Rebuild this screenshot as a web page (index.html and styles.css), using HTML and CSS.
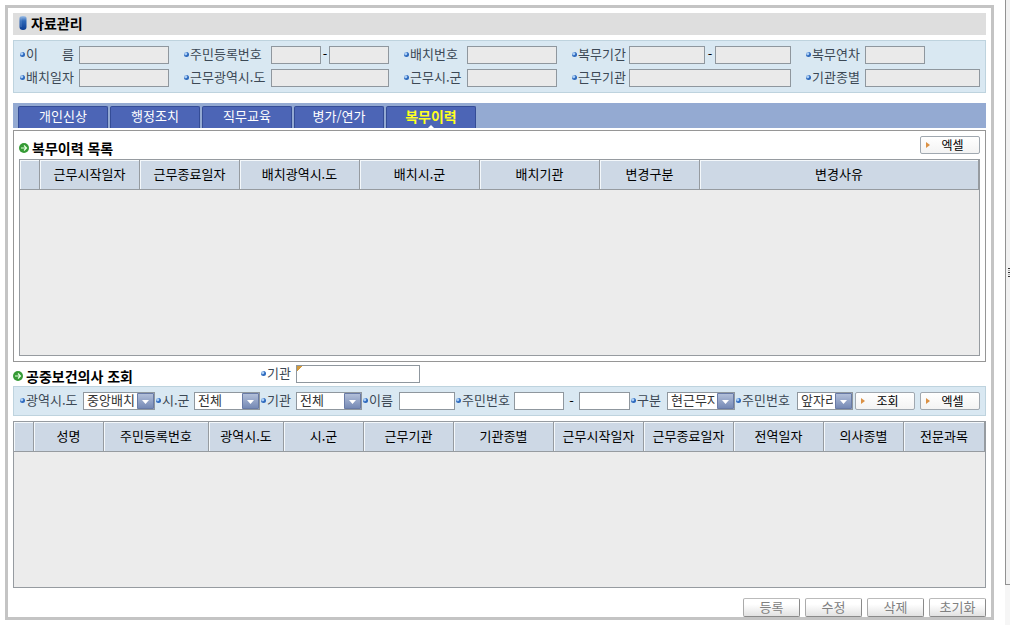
FILE: index.html
```html
<!DOCTYPE html>
<html lang="ko">
<head>
<meta charset="utf-8">
<title>자료관리</title>
<link rel="stylesheet" href="styles.css">
</head>
<body>
<main class="frame">
  <h1 class="page-title">
    <svg width="8" height="16" viewBox="0 0 8 16" aria-hidden="true">
      <defs><linearGradient id="pill" x1="0" y1="0" x2="0" y2="1"><stop offset="0" stop-color="#9fc0e6"/><stop offset=".35" stop-color="#2f68b8"/><stop offset="1" stop-color="#0c3d94"/></linearGradient></defs>
      <path d="M0.5 3Q0.5 1 4 1T7.5 3V12Q7.5 15 4 15T0.5 12Z" fill="url(#pill)"/>
      <path d="M2 3V12" stroke="#8db4e4" stroke-width="1" opacity=".4"/>
    </svg>
    자료관리
  </h1>

  <form class="summary">
    <label class="label" for="s-name"><span class="spread">이 름</span></label>
    <input class="field readonly" id="s-name" readonly>
    <label class="label" for="s-id1">주민등록번호</label>
    <div class="pair id-pair"><input class="field readonly" id="s-id1" readonly><span class="dash">-</span><input class="field readonly" aria-label="주민등록번호 뒷자리" readonly></div>
    <label class="label" for="s-no">배치번호</label>
    <input class="field readonly" id="s-no" readonly>
    <label class="label" for="s-from">복무기간</label>
    <div class="pair"><input class="field readonly" id="s-from" readonly><span class="dash">-</span><input class="field readonly" aria-label="복무기간 종료" readonly></div>
    <label class="label" for="s-year">복무연차</label>
    <input class="field readonly half" id="s-year" readonly>

    <label class="label" for="s-date">배치일자</label>
    <input class="field readonly" id="s-date" readonly>
    <label class="label" for="s-region">근무광역시.도</label>
    <input class="field readonly" id="s-region" readonly>
    <label class="label" for="s-city">근무시.군</label>
    <input class="field readonly" id="s-city" readonly>
    <label class="label" for="s-org">근무기관</label>
    <input class="field readonly" id="s-org" readonly>
    <label class="label" for="s-type">기관종별</label>
    <input class="field readonly" id="s-type" readonly>
  </form>

  <nav class="tabs">
    <button class="tab" type="button">개인신상</button>
    <button class="tab" type="button">행정조치</button>
    <button class="tab" type="button">직무교육</button>
    <button class="tab" type="button">병가/연가</button>
    <button class="tab active" type="button">복무이력</button>
  </nav>

  <section class="history">
    <div class="history-head">
      <h2 class="section-title">
        <svg width="10" height="10" viewBox="0 0 10 10" aria-hidden="true"><circle cx="5" cy="5" r="5" fill="#359a35"/><path d="M2 5H7.5M5 2.5L7.5 5L5 7.5" fill="none" stroke="#e6ffe0" stroke-width="1.2"/></svg>
        복무이력 목록
      </h2>
      <button class="action" type="button">엑셀</button>
    </div>
    <table class="grid">
      <colgroup><col class="w20"><col class="w100"><col class="w100"><col class="w120"><col class="w120"><col class="w120"><col class="w100"><col></colgroup>
      <thead><tr><th></th><th>근무시작일자</th><th>근무종료일자</th><th>배치광역시.도</th><th>배치시.군</th><th>배치기관</th><th>변경구분</th><th>변경사유</th></tr></thead>
      <tbody><tr><td class="empty tall" colspan="8"></td></tr></tbody>
    </table>
  </section>

  <section class="search">
    <div class="search-head">
      <h2 class="section-title">
        <svg width="10" height="10" viewBox="0 0 10 10" aria-hidden="true"><circle cx="5" cy="5" r="5" fill="#359a35"/><path d="M2 5H7.5M5 2.5L7.5 5L5 7.5" fill="none" stroke="#e6ffe0" stroke-width="1.2"/></svg>
        공중보건의사 조회
      </h2>
      <label class="label" for="q-org">기관</label>
      <input class="field required" id="q-org">
    </div>
    <form class="filters">
      <label class="label" for="f-region">광역시.도</label>
      <select class="field select" id="f-region"><option>중앙배치</option></select>
      <label class="label" for="f-city">시.군</label>
      <select class="field select" id="f-city"><option>전체</option></select>
      <label class="label" for="f-org">기관</label>
      <select class="field select" id="f-org"><option>전체</option></select>
      <label class="label" for="f-name">이름</label>
      <input class="field" id="f-name">
      <label class="label" for="f-id">주민번호</label>
      <input class="field" id="f-id">
      <span class="dash">-</span>
      <input class="field" aria-label="주민번호 뒷자리">
      <label class="label" for="f-kind">구분</label>
      <select class="field select" id="f-kind"><option>현근무자</option></select>
      <label class="label" for="f-part">주민번호</label>
      <select class="field select" id="f-part"><option>앞자리</option></select>
      <div class="filter-actions">
        <button class="action" type="button">조회</button>
        <button class="action" type="button">엑셀</button>
      </div>
    </form>
    <table class="grid">
      <colgroup><col class="w20"><col class="w70"><col class="w105"><col class="w75"><col class="w80"><col class="w90"><col class="w100"><col class="w90"><col class="w90"><col class="w90"><col class="w80"><col></colgroup>
      <thead><tr><th></th><th>성명</th><th>주민등록번호</th><th>광역시.도</th><th>시.군</th><th>근무기관</th><th>기관종별</th><th>근무시작일자</th><th>근무종료일자</th><th>전역일자</th><th>의사종별</th><th>전문과목</th></tr></thead>
      <tbody><tr><td class="empty" colspan="12"></td></tr></tbody>
    </table>
  </section>

  <footer class="commands">
    <button class="command" type="button" disabled>등록</button>
    <button class="command" type="button" disabled>수정</button>
    <button class="command" type="button" disabled>삭제</button>
    <button class="command" type="button" disabled>초기화</button>
  </footer>
</main>
<aside class="splitter" aria-hidden="true">
  <div class="splitter-bar"><svg width="2" height="9" viewBox="0 0 2 9"><path d="M0 .5H2M0 4.5H2M0 8.5H2" stroke="#333"/><path d="M0 2.5H2M0 6.5H2" stroke="#aaa"/></svg></div>
</aside>
</body>
</html>
```
FILE: styles.css
```css
* {
  box-sizing: border-box;
}

body {
  display: grid;
  grid-template-columns: minmax(0, 1fr) 5px;
  column-gap: 11px;
  align-items: start;
  margin: 0;
  padding-left: 5px;
  background: #fff;
  color: #000;
  font: 13px/16px "Noto Sans CJK KR", sans-serif;
}

input,
select,
button {
  margin: 0;
  font: inherit;
}

.frame {
  margin-top: 5px;
  padding: 5px 5px 0;
  border: 3px solid #c4c4c4;
}

.page-title {
  display: flex;
  align-items: center;
  gap: 4px;
  height: 22px;
  margin: 0 0 5px;
  padding: 0 0 2px 6px;
  background: #dedede;
  font-size: 14px;
  line-height: 16px;
}

/* Labels and fields */

.label {
  display: flex;
  align-items: center;
  padding-bottom: 2px;
  color: #3c4855;
  white-space: nowrap;
}

.label::before {
  content: "";
  flex: none;
  width: 5px;
  height: 5px;
  margin: 0 1px 0 1px;
  border-radius: 50%;
  background: radial-gradient(circle at 35% 35%, #a9cdf5 0 1px, #2b68bd 2px);
}

.spread {
  width: 48px;
  text-align-last: justify;
}

.field {
  width: 100%;
  min-width: 0;
  height: 18px;
  padding: 0 4px;
  border: 1px solid #8f979e;
  border-radius: 0;
  background: #fff;
  color: #333;
}

.readonly {
  background: #eaeaea;
}

.half {
  width: 60px;
}

.required {
  background: linear-gradient(135deg, #d39a3c 4px, #fff 4px);
}

.select {
  padding: 0 19px 2px 3px;
  line-height: 14px;
  appearance: none;
  background: #fff url("data:image/svg+xml,%3Csvg xmlns='http://www.w3.org/2000/svg' width='17' height='16'%3E%3Cdefs%3E%3ClinearGradient id='g' x2='0' y2='1'%3E%3Cstop stop-color='%23b4c1da'/%3E%3Cstop offset='1' stop-color='%237488b4'/%3E%3C/linearGradient%3E%3C/defs%3E%3Cpath d='M.5.5h16v15H.5z' fill='url(%23g)' stroke='%23697ba6'/%3E%3Cpath d='M5 7h7l-3.5 4z' fill='%23fff'/%3E%3C/svg%3E") right center no-repeat;
}

.pair {
  display: grid;
  grid-template-columns: 1fr 10px 1fr;
}

.id-pair {
  grid-template-columns: 5fr 8px 6fr;
}

.dash {
  text-align: center;
}

/* Summary panel */

.summary {
  display: grid;
  grid-template-columns:
    60px minmax(0, 90fr) 102px minmax(0, 118fr) 78px minmax(0, 90fr)
    72px minmax(0, 162fr) 74px minmax(0, 115fr);
  row-gap: 5px;
  margin-bottom: 10px;
  padding: 5px;
  border: 1px solid #bed3de;
  background: #d9e8f2;
}

.summary .label:not(:first-child, :nth-child(11)) {
  padding-left: 14px;
}

/* Tabs */

.tabs {
  display: flex;
  gap: 2px;
  margin-bottom: 2px;
  padding: 3px 5px 0;
  background: #94aad2;
}

.tab {
  position: relative;
  width: 90px;
  height: 22px;
  padding: 0 0 4px;
  border: 1px solid #344c96;
  border-bottom: 0;
  border-radius: 2px 2px 0 0;
  background: #4c65b6;
  color: #fff;
  line-height: 16px;
}

.active {
  color: #ffff20;
  font-size: 14px;
  font-weight: bold;
}

.active::after {
  content: "";
  position: absolute;
  bottom: 0;
  left: calc(50% - 3px);
  border: 3px solid transparent;
  border-top: 0;
  border-bottom-color: #fff;
}

/* Sections */

.section-title {
  display: flex;
  align-items: center;
  gap: 3px;
  margin: 0;
  font-size: 14px;
  line-height: 20px;
}

.history {
  padding: 5px;
  border: 1px solid #969696;
}

.history-head {
  display: flex;
  justify-content: space-between;
  align-items: flex-start;
  height: 23px;
}

.history-head .section-title {
  padding-top: 2px;
}

.search-head {
  display: grid;
  grid-template-columns: 247px 36px 124px;
  align-items: center;
  height: 24px;
}

.search-head .section-title {
  padding-top: 3px;
}

.filters {
  display: grid;
  grid-template-columns:
    64px minmax(0, 72fr) 39px minmax(0, 66fr) 36px minmax(0, 66fr)
    37px minmax(0, 56fr) 59px minmax(0, 50fr) 15px minmax(0, 51fr)
    37px minmax(0, 68fr) 62px minmax(0, 56fr) auto;
  align-items: center;
  margin-bottom: 5px;
  padding: 5px;
  border: 1px solid #bed3de;
  background: #d9e8f2;
}

.filter-actions {
  display: flex;
  gap: 5px;
  padding-left: 2px;
}

/* Data grids */

.grid {
  width: 100%;
  border: 1px solid #969ba0;
  border-spacing: 0;
  table-layout: fixed;
  background: #ececec;
}

.grid th {
  height: 30px;
  padding: 0 0 2px;
  border: solid #969ba0;
  border-width: 0 1px 1px 0;
  background: #cdd8e5;
  box-shadow: inset 1px 1px #f4f8fb;
  font-weight: normal;
  white-space: nowrap;
}

.empty {
  height: 135px;
  padding: 0;
}

.tall {
  height: 165px;
}

.w20 { width: 20px; }
.w70 { width: 70px; }
.w75 { width: 75px; }
.w80 { width: 80px; }
.w90 { width: 90px; }
.w100 { width: 100px; }
.w105 { width: 105px; }
.w120 { width: 120px; }

/* Buttons */

.action {
  width: 60px;
  height: 18px;
  padding: 0 0 0 5px;
  border: 1px solid #a0a8b0;
  border-radius: 2px;
  background:
    url("data:image/svg+xml,%3Csvg xmlns='http://www.w3.org/2000/svg' width='4' height='6'%3E%3Cpath d='M0 0l4 3-4 3z' fill='%23db9144'/%3E%3C/svg%3E") 5px center no-repeat,
    linear-gradient(#fff, #f3f3f3);
  color: #000;
  font-size: 12px;
  line-height: 16px;
}

.commands {
  display: flex;
  justify-content: flex-end;
  gap: 5px;
  padding-top: 10px;
}

.command {
  width: 57px;
  height: 19px;
  padding: 0 0 2px;
  border: 1px solid #8a8a8a;
  border-top-color: #bbb;
  border-left-color: #aaa;
  border-radius: 2px;
  background: linear-gradient(#fff 30%, #e2e2e2);
  color: #808080;
  line-height: 16px;
}

/* Right edge */

.splitter {
  height: 100vh;
  background: #f6f6f6;
}

.splitter-bar {
  display: flex;
  justify-content: flex-end;
  align-items: center;
  height: 585px;
  padding-bottom: 40px;
  border: solid #929292;
  border-width: 0 0 1px 1px;
  background: #f1f1f1;
}
```
